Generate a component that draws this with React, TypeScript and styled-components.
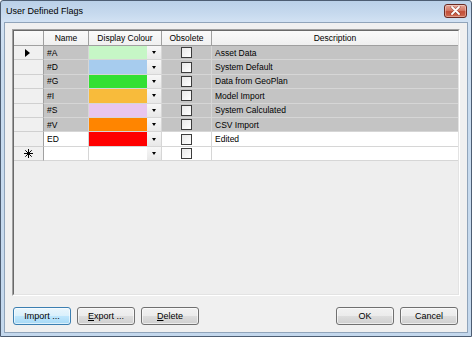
import React from "react";
import styled, { createGlobalStyle } from "styled-components";

const Global = createGlobalStyle`
    html, body {
        margin: 0;
        padding: 0;
    }
    body {
        width: 472px;
        height: 337px;
        overflow: hidden;
        font-family: "Liberation Sans", Arial, sans-serif;
        font-size: 8.5px;
        color: #000;
    }
`

const Window = styled.div`
    width: 472px;
    height: 337px;
    box-sizing: border-box;
    border: 1px solid #4d5d72;
    border-radius: 3px 3px 0 0;
    background: linear-gradient(to bottom, #bad0e8 0px, #c6d9ee 12px, #d2e2f3 21px, #c9dcef 60px, #c4d8ed 100%);
    display: flex;
    flex-direction: column;
    padding: 0 3px 3px 3px;
`

const TitleBar = styled.div`
    height: 21px;
    display: flex;
    align-items: center;
    justify-content: space-between;
    padding-left: 2px;
`

const Title = styled.span`
    font-size: 9px;
    color: #000;
    margin-top: -2px;
`

const Close = styled.div`
    width: 23px;
    height: 14px;
    box-sizing: border-box;
    margin-right: 1px;
    margin-top: -2px;
    border: 1px solid #6b2a22;
    border-radius: 3px;
    background: linear-gradient(to bottom, #e6a596 0%, #d47966 45%, #c24e38 55%, #cf6b52 100%);
    box-shadow: inset 0 0 0 1px rgba(255, 255, 255, 0.35);
    display: flex;
    align-items: center;
    justify-content: center;
`

const Client = styled.div`
    flex: 1;
    display: flex;
    flex-direction: column;
    background: #f0f0f0;
    border: 1px solid #90a4ba;
    padding: 6px 7px 7px 7px;
`

const Panel = styled.div`
    flex: 1;
    border: 1px solid;
    border-color: #a0a0a0 #ffffff #ffffff #a0a0a0;
    display: flex;
`

const Sunken = styled.div`
    flex: 1;
    border: 1px solid;
    border-color: #696969 #e3e3e3 #e3e3e3 #696969;
    background: #eeeeee;
`

const Row = styled.div<{ $h: number }>`
    display: grid;
    grid-template-columns: 30px 45px 73px 50px 1fr;
    height: ${p => p.$h}px;
`

const HeadCell = styled.div`
    background: linear-gradient(to bottom, #fafafa, #f0f0f0);
    border-right: 1px solid #a0a0a0;
    border-bottom: 1px solid #a0a0a0;
    display: flex;
    align-items: center;
    justify-content: center;
    &:last-child {
        border-right: none;
    }
`

const RowHead = styled.div`
    background: #f0f0f0;
    border-right: 1px solid #a0a0a0;
    border-bottom: 1px solid #d0d0d0;
    display: flex;
    align-items: center;
    justify-content: center;
`

const Cell = styled.div<{ $grey: boolean; $center?: boolean }>`
    background: ${p => (p.$grey ? "#c4c4c4" : "#ffffff")};
    border-right: 1px solid #d6d6d6;
    border-bottom: 1px solid #d6d6d6;
    display: flex;
    align-items: center;
    justify-content: ${p => (p.$center ? "center" : "flex-start")};
    padding-left: ${p => (p.$center ? 0 : 3)}px;
    overflow: hidden;
    white-space: nowrap;
    &:last-child {
        border-right: none;
    }
`

const ColourCell = styled.div`
    display: flex;
    border-right: 1px solid #d6d6d6;
    border-bottom: 1px solid #d6d6d6;
    background: #ffffff;
`

const Swatch = styled.div<{ $c: string }>`
    flex: 1;
    background: ${p => p.$c};
`

const Drop = styled.div`
    width: 14px;
    background: linear-gradient(to bottom, #f7f7f7, #e8e8e8);
    display: flex;
    align-items: center;
    justify-content: center;
`

const Arrow = styled.div`
    width: 0;
    height: 0;
    border-left: 2.5px solid transparent;
    border-right: 2.5px solid transparent;
    border-top: 3px solid #000;
`

const Check = styled.div`
    width: 11px;
    height: 11px;
    box-sizing: border-box;
    border: 1px solid #3c3c3c;
    background: linear-gradient(to bottom right, #e8e8e8, #ffffff);
`

const Pointer = styled.div`
    width: 0;
    height: 0;
    border-top: 4px solid transparent;
    border-bottom: 4px solid transparent;
    border-left: 5px solid #000;
    margin-left: -2px;
`

const ButtonBar = styled.div`
    display: flex;
    gap: 6px;
    margin-top: 11px;
    padding: 0 2px 0 1px;
`

const Spacer = styled.div`
    flex: 1;
`

const Button = styled.div<{ $default?: boolean }>`
    width: 58px;
    height: 18px;
    box-sizing: border-box;
    border: 1px solid ${p => (p.$default ? "#3c7fb1" : "#707070")};
    border-radius: 3px;
    background: ${p =>
        p.$default
            ? "linear-gradient(to bottom, #eaf6fd 0%, #d9f0fc 50%, #bee6fd 51%, #a7d9f5 100%)"
            : "linear-gradient(to bottom, #f2f2f2 0%, #ebebeb 50%, #dddddd 51%, #cfcfcf 100%)"};
    box-shadow: inset 0 0 0 1px rgba(255, 255, 255, 0.6);
    display: flex;
    align-items: center;
    justify-content: center;
    font-size: 9px;
    u {
        text-decoration: underline;
    }
`

type Flag = { name: string; colour: string; desc: string; grey: boolean }

const flags: Flag[] = [
    { name: "#A", colour: "#c6f6c6", desc: "Asset Data", grey: true },
    { name: "#D", colour: "#a7ccee", desc: "System Default", grey: true },
    { name: "#G", colour: "#33e033", desc: "Data from GeoPlan", grey: true },
    { name: "#I", colour: "#f8bb3b", desc: "Model Import", grey: true },
    { name: "#S", colour: "#e8c6ee", desc: "System Calculated", grey: true },
    { name: "#V", colour: "#ff8500", desc: "CSV Import", grey: true },
    { name: "ED", colour: "#ff0000", desc: "Edited", grey: false },
]

function Star() {
    return (
        <svg width="9" height="9" viewBox="0 0 9 9">
            <g stroke="#000" strokeWidth="1">
                <line x1="4.5" y1="0" x2="4.5" y2="9" />
                <line x1="0" y1="4.5" x2="9" y2="4.5" />
                <line x1="1.3" y1="1.3" x2="7.7" y2="7.7" />
                <line x1="7.7" y1="1.3" x2="1.3" y2="7.7" />
            </g>
        </svg>
    )
}

function CloseX() {
    return (
        <svg width="11" height="9" viewBox="0 0 11 9">
            <path d="M2 1 L9 8 M9 1 L2 8" stroke="#5a1f18" strokeWidth="3" strokeLinecap="round" opacity="0.5" />
            <path d="M2 1 L9 8 M9 1 L2 8" stroke="#ffffff" strokeWidth="1.8" strokeLinecap="round" />
        </svg>
    )
}

export default function App() {
    return (
        <>
            <Global />
            <Window>
                <TitleBar>
                    <Title>User Defined Flags</Title>
                    <Close>
                        <CloseX />
                    </Close>
                </TitleBar>
                <Client>
                    <Panel>
                        <Sunken>
                            <Row $h={15}>
                                <HeadCell />
                                <HeadCell>Name</HeadCell>
                                <HeadCell>Display Colour</HeadCell>
                                <HeadCell>Obsolete</HeadCell>
                                <HeadCell>Description</HeadCell>
                            </Row>
                            {flags.map((f, i) => (
                                <Row $h={14.4} key={f.name}>
                                    <RowHead>{i === 0 && <Pointer />}</RowHead>
                                    <Cell $grey={f.grey}>{f.name}</Cell>
                                    <ColourCell>
                                        <Swatch $c={f.colour} />
                                        <Drop>
                                            <Arrow />
                                        </Drop>
                                    </ColourCell>
                                    <Cell $grey={f.grey} $center>
                                        <Check />
                                    </Cell>
                                    <Cell $grey={f.grey}>{f.desc}</Cell>
                                </Row>
                            ))}
                            <Row $h={14.4}>
                                <RowHead>
                                    <Star />
                                </RowHead>
                                <Cell $grey={false} />
                                <ColourCell>
                                    <Swatch $c="#ffffff" />
                                    <Drop>
                                        <Arrow />
                                    </Drop>
                                </ColourCell>
                                <Cell $grey={false} $center>
                                    <Check />
                                </Cell>
                                <Cell $grey={false} />
                            </Row>
                        </Sunken>
                    </Panel>
                    <ButtonBar>
                        <Button $default>Import ...</Button>
                        <Button>
                            <span><u>E</u>xport ...</span>
                        </Button>
                        <Button>
                            <span><u>D</u>elete</span>
                        </Button>
                        <Spacer />
                        <Button>OK</Button>
                        <Button>Cancel</Button>
                    </ButtonBar>
                </Client>
            </Window>
        </>
    )
}
